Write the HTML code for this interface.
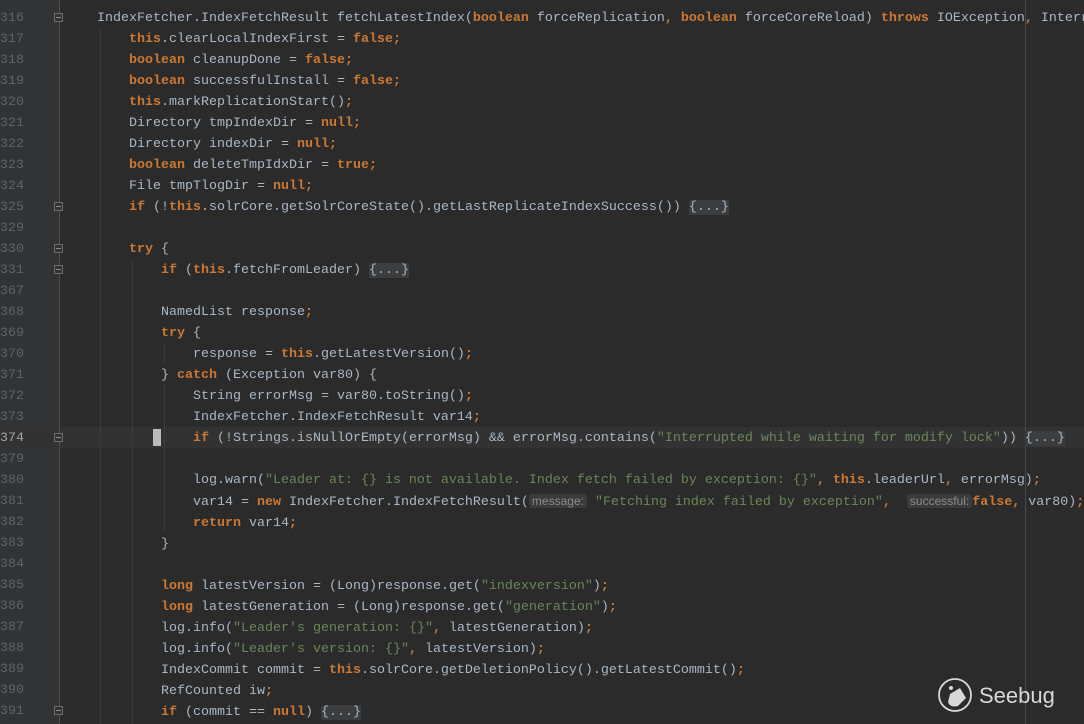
<!DOCTYPE html>
<html><head><meta charset="utf-8"><style>
html,body{margin:0;padding:0;background:#2b2b2b;width:1084px;height:724px;overflow:hidden;position:relative}
.gut{position:absolute;left:0;top:0;width:60px;height:724px;background:#313335}
.gl{position:absolute;left:59px;top:0;width:1px;height:724px;background:#4b4d4f}
pre{margin:0;position:absolute;font-family:"Liberation Mono",monospace;font-size:13.33px;line-height:21px;overflow:hidden}
.num{left:0;top:8px;color:#606366;width:40px;text-align:left}
.code{left:97px;top:8px;width:987px;color:#a9b7c6;white-space:pre}
.k{color:#cc7832;font-weight:bold}
.s{color:#6a8759}
.f{background:#3b3d3f;color:#a9b7c6;border-radius:2px}
.h{font-family:"Liberation Sans",sans-serif;font-size:12px;color:#8c8c8c;background:#3b3b3b;border-radius:3px;padding:0 3px}
.cur{position:absolute;left:0;top:427px;width:1084px;height:21px;background:#323232}
.guide{position:absolute;width:1px;background:#3b3b3b}
.rm{position:absolute;left:1025px;top:0;width:1px;height:724px;background:#4a4a4a}
.fold{position:absolute;left:54px;width:9px;height:9px;border:1px solid #6b6d6f;box-sizing:border-box;background:#313335}
.fold:after{content:"";position:absolute;left:1px;top:3px;width:5px;height:1px;background:#8a8c8e}
.caret{position:absolute;left:153px;top:429px;width:8px;height:17px;background:#bbbbbb}
</style></head><body>
<div class="gut"></div>
<div class="cur"></div>
<div class="gl"></div>
<div class="rm"></div>
<div class="guide" style="left:100px;top:29px;height:696px"></div>
<div class="guide" style="left:132px;top:260px;height:465px"></div>
<div class="guide" style="left:164px;top:343px;height:21px"></div>
<div class="guide" style="left:164px;top:385px;height:147px"></div>
<div class="fold" style="top:13px"></div>
<div class="fold" style="top:202px"></div>
<div class="fold" style="top:244px"></div>
<div class="fold" style="top:265px"></div>
<div class="fold" style="top:433px"></div>
<div class="fold" style="top:706px"></div>
<div class="caret"></div>
<pre class="num">316
317
318
319
320
321
322
323
324
325
329
330
331
367
368
369
370
371
372
373
<span style="color:#a4a3a3">374</span>
379
380
381
382
383
384
385
386
387
388
389
390
391</pre>
<pre class="code">IndexFetcher.IndexFetchResult fetchLatestIndex(<span class="k">boolean</span> forceReplication<span class="k">,</span> <span class="k">boolean</span> forceCoreReload) <span class="k">throws</span> IOException<span class="k">,</span> InterruptedException {
    <span class="k">this</span>.clearLocalIndexFirst = <span class="k">false;</span>
    <span class="k">boolean</span> cleanupDone = <span class="k">false;</span>
    <span class="k">boolean</span> successfulInstall = <span class="k">false;</span>
    <span class="k">this</span>.markReplicationStart()<span class="k">;</span>
    Directory tmpIndexDir = <span class="k">null;</span>
    Directory indexDir = <span class="k">null;</span>
    <span class="k">boolean</span> deleteTmpIdxDir = <span class="k">true;</span>
    File tmpTlogDir = <span class="k">null;</span>
    <span class="k">if</span> (!<span class="k">this</span>.solrCore.getSolrCoreState().getLastReplicateIndexSuccess()) <span class="f">{...}</span>

    <span class="k">try</span> {
        <span class="k">if</span> (<span class="k">this</span>.fetchFromLeader) <span class="f">{...}</span>

        NamedList response<span class="k">;</span>
        <span class="k">try</span> {
            response = <span class="k">this</span>.getLatestVersion()<span class="k">;</span>
        } <span class="k">catch</span> (Exception var80) {
            String errorMsg = var80.toString()<span class="k">;</span>
            IndexFetcher.IndexFetchResult var14<span class="k">;</span>
            <span class="k">if</span> (!Strings.isNullOrEmpty(errorMsg) &amp;&amp; errorMsg.contains(<span class="s">"Interrupted while waiting for modify lock"</span>)) <span class="f">{...}</span>

            log.warn(<span class="s">"Leader at: {} is not available. Index fetch failed by exception: {}"</span><span class="k">, this</span>.leaderUrl<span class="k">,</span> errorMsg)<span class="k">;</span>
            var14 = <span class="k">new</span> IndexFetcher.IndexFetchResult(<span class="h">message:</span> <span class="s">"Fetching index failed by exception"</span><span class="k">,</span>  <span class="h">successful:</span><span class="k">false,</span> var80)<span class="k">;</span>
            <span class="k">return</span> var14<span class="k">;</span>
        }

        <span class="k">long</span> latestVersion = (Long)response.get(<span class="s">"indexversion"</span>)<span class="k">;</span>
        <span class="k">long</span> latestGeneration = (Long)response.get(<span class="s">"generation"</span>)<span class="k">;</span>
        log.info(<span class="s">"Leader's generation: {}"</span><span class="k">,</span> latestGeneration)<span class="k">;</span>
        log.info(<span class="s">"Leader's version: {}"</span><span class="k">,</span> latestVersion)<span class="k">;</span>
        IndexCommit commit = <span class="k">this</span>.solrCore.getDeletionPolicy().getLatestCommit()<span class="k">;</span>
        RefCounted iw<span class="k">;</span>
        <span class="k">if</span> (commit == <span class="k">null</span>) <span class="f">{...}</span></pre>
<svg style="position:absolute;left:936px;top:676px" width="140" height="40" viewBox="0 0 140 40">
<circle cx="19" cy="19" r="16" fill="none" stroke="#d8d8d8" stroke-width="1.8"/>
<path d="M14 18 L24 12 L30 22 L22 30 Q14 32 12 26 Z" fill="#d8d8d8"/>
<circle cx="15" cy="12" r="2" fill="#d8d8d8"/>
<text x="43" y="27" font-family="Liberation Sans,sans-serif" font-size="22" fill="#d8d8d8">Seebug</text>
</svg>
</body></html>
